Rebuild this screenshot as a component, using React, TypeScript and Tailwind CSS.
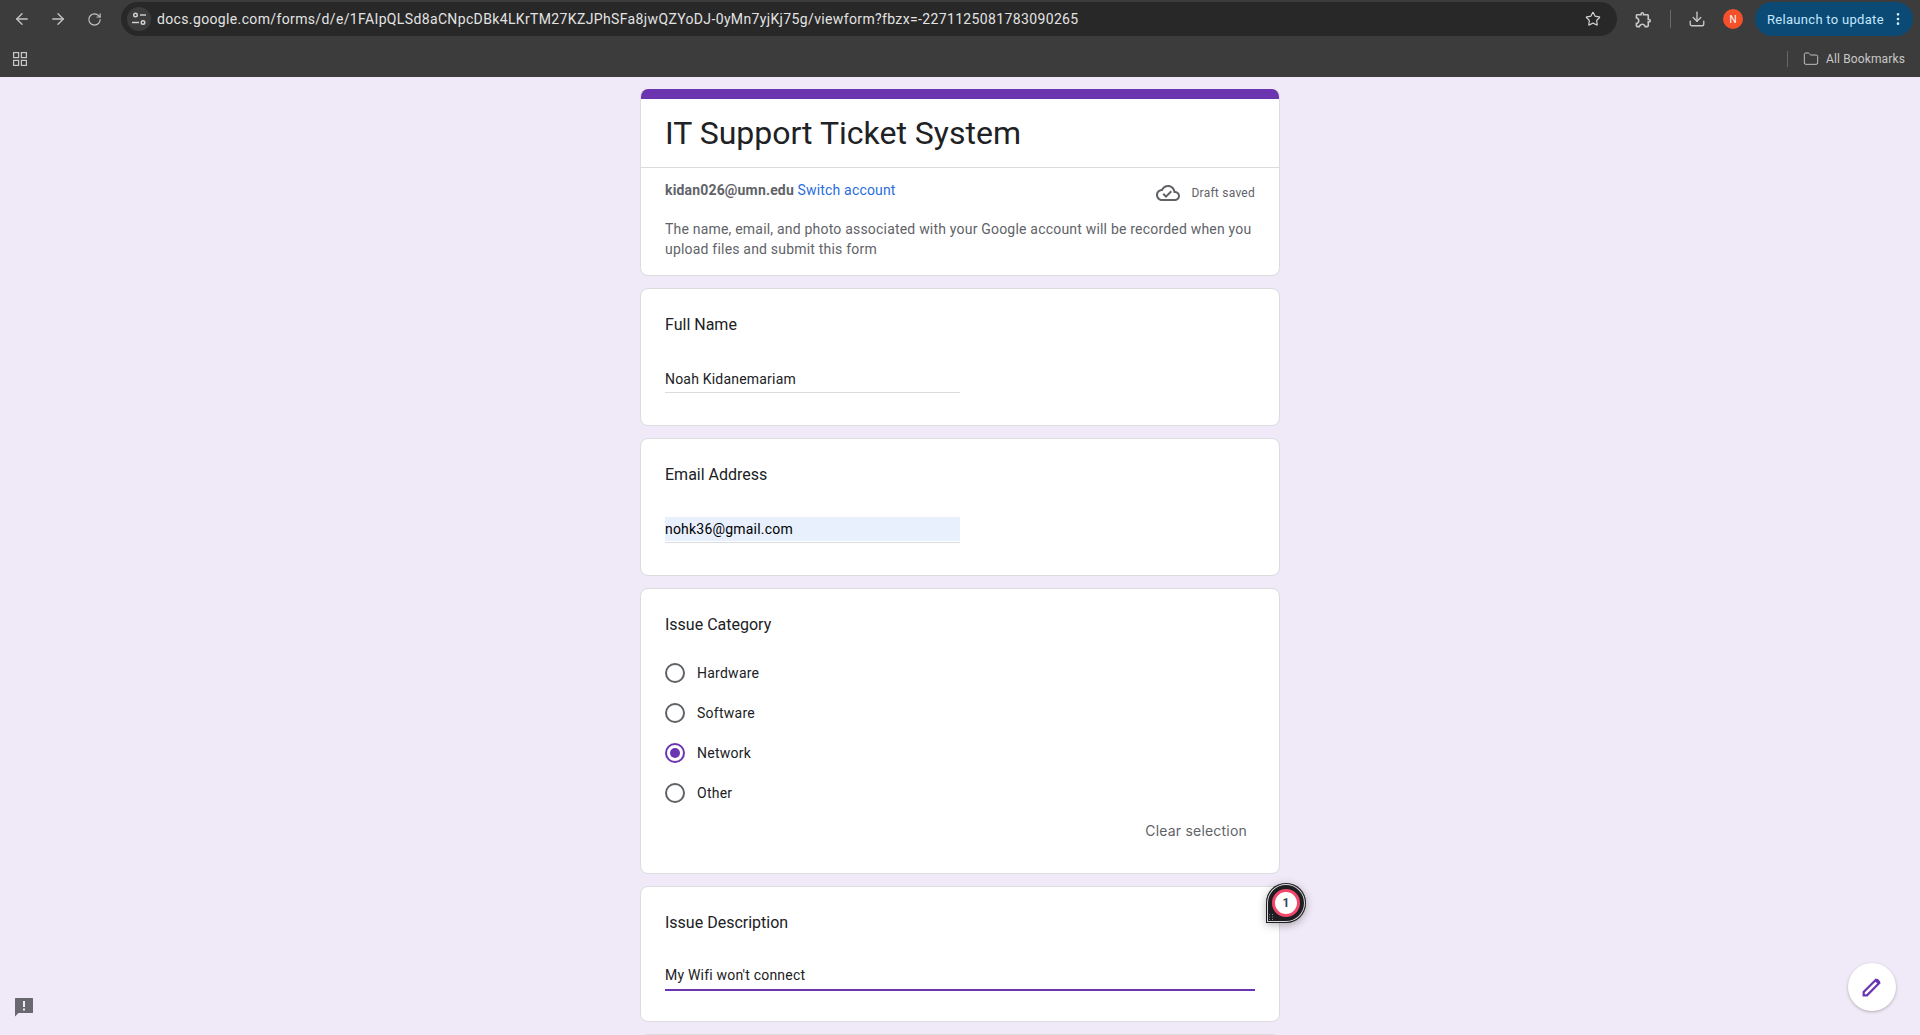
import React from "react";
import { ArrowLeft, ArrowRight, RotateCw, Star, Download, EllipsisVertical, Folder } from "lucide-react";

const roboto = "font-['Roboto',sans-serif]";

function Tune() {
  return (
    <svg width="16" height="16" viewBox="0 0 16 16" fill="none" stroke="#d5d5d5" strokeWidth="1.4">
      <circle cx="4.5" cy="4" r="1.8" />
      <path d="M9 4h6" />
      <path d="M1 11.5h7" />
      <circle cx="12" cy="11.5" r="1.8" />
    </svg>
  );
}

function Apps() {
  return (
    <svg width="14" height="14" viewBox="0 0 14 14" fill="none" stroke="#c8c8c8" strokeWidth="1.2">
      <rect x="0.6" y="0.6" width="5" height="5" />
      <rect x="8.4" y="0.6" width="5" height="5" />
      <rect x="0.6" y="8.4" width="5" height="5" />
      <rect x="8.4" y="8.4" width="5" height="5" />
    </svg>
  );
}

function Extension() {
  return (
    <svg width="19" height="19" viewBox="0 0 24 24" fill="#c8c8c8">
      <path d="M10.5 4.5c.28 0 .5.22.5.5v2h6v6h2c.28 0 .5.22.5.5s-.22.5-.5.5h-2v6h-2.12c-.68-1.75-2.39-3-4.38-3s-3.7 1.25-4.38 3H4v-2.12c1.75-.68 3-2.39 3-4.38 0-1.99-1.24-3.7-2.99-4.38L4 7h6V5c0-.28.22-.5.5-.5m0-2C9.12 2.5 8 3.62 8 5H4c-1.1 0-1.99.9-1.99 2v3.8h.29c1.49 0 2.7 1.21 2.7 2.7s-1.21 2.7-2.7 2.7H2V20c0 1.1.9 2 2 2h3.8v-.3c0-1.49 1.21-2.7 2.7-2.7s2.7 1.21 2.7 2.7v.3H17c1.1 0 2-.9 2-2v-4c1.38 0 2.5-1.12 2.5-2.5S20.38 11 19 11V7c0-1.1-.9-2-2-2h-4c0-1.38-1.12-2.5-2.5-2.5z" />
    </svg>
  );
}

function CloudDone() {
  return (
    <svg width="24" height="24" viewBox="0 0 24 24" fill="#5f6368">
      <path d="M19.35 10.04C18.67 6.59 15.64 4 12 4 9.11 4 6.6 5.64 5.35 8.04 2.34 8.36 0 10.91 0 14c0 3.31 2.69 6 6 6h13c2.76 0 5-2.24 5-5 0-2.64-2.05-4.78-4.65-4.96zM19 18H6c-2.21 0-4-1.79-4-4 0-2.05 1.53-3.76 3.56-3.97l1.07-.11.5-.95C8.08 7.14 9.94 6 12 6c2.62 0 4.88 1.86 5.39 4.43l.3 1.5 1.53.11c1.56.1 2.78 1.41 2.78 2.96 0 1.65-1.35 3-3 3zm-9-3.82l-2.09-2.09L6.5 13.5 10 17l6.01-6.01-1.41-1.41z" />
    </svg>
  );
}

function Radio({ label, checked }: { label: string; checked?: boolean }) {
  return (
    <div className="flex h-[40px] items-center">
      <div className={`flex h-[20px] w-[20px] items-center justify-center rounded-full border-2 ${checked ? "border-[#6b35b0]" : "border-[#5f6368]"}`}>
        {checked && <div className="h-[10px] w-[10px] rounded-full bg-[#6b35b0]" />}
      </div>
      <span className="ml-[12px] text-[14px] leading-[20px] tracking-[0.25px] text-[#202124]">{label}</span>
    </div>
  );
}

function Card({ className, children }: { className?: string; children: React.ReactNode }) {
  return <section className={`w-[640px] shrink-0 rounded-lg border border-[#dadce0] bg-white px-[24px] ${className ?? ""}`}>{children}</section>;
}

export default function App() {
  return (
    <div className={`relative flex h-[1035px] flex-col overflow-hidden bg-[#f0e9f7] ${roboto}`}>
      <header className="flex h-[77px] shrink-0 flex-col bg-[#3c3c3c]">
        <div className="flex h-[38px] items-center">
          <div className="flex w-[121px] shrink-0 items-center pl-[13px] text-[#c4c4c4]">
            <ArrowLeft size={18} strokeWidth={1.8} />
            <ArrowRight size={18} strokeWidth={1.8} className="ml-[18px]" />
            <RotateCw size={15} strokeWidth={1.8} className="ml-[20px]" />
          </div>
          <div className="flex h-[34px] w-[1496px] shrink-0 items-center rounded-full bg-[#282828] pl-[6px] pr-[16px]">
            <div className="flex h-[24px] w-[24px] items-center justify-center rounded-full bg-[#3c3c3c]">
              <Tune />
            </div>
            <span className="ml-[6px] flex-1 text-[14px] tracking-[0.36px] text-[#e3e3e3]">docs.google.com/forms/d/e/1FAIpQLSd8aCNpcDBk4LKrTM27KZJPhSFa8jwQZYoDJ-0yMn7yjKj75g/viewform?fbzx=-2271125081783090265</span>
            <Star size={16} strokeWidth={1.8} className="text-[#d0d0d0]" />
          </div>
          <div className="ml-[17px]">
            <Extension />
          </div>
          <div className="ml-[17px] h-[18px] w-px bg-[#6a6a6a]" />
          <Download size={18} strokeWidth={1.8} className="ml-[17px] text-[#c8c8c8]" />
          <div className="ml-[17px] flex h-[20px] w-[20px] items-center justify-center rounded-full bg-[#f4502a] text-[10px] text-white">N</div>
          <div className="ml-[12px] flex h-[34px] w-[158px] items-center rounded-full bg-[#0b4a75] pl-[12px] text-[13px] tracking-[0.3px] text-[#c2e7ff]">
            <span className="pt-[1px]">Relaunch to update</span>
            <EllipsisVertical size={16} className="ml-[6px] text-[#d3ecff]" />
          </div>
        </div>
        <div className="flex flex-1 items-center pl-[13px] pr-[15px] pt-[3px]">
          <Apps />
          <div className="ml-auto h-[16px] w-px bg-[#666666]" />
          <Folder size={16} strokeWidth={1.4} className="ml-[15px] text-[#c8c8c8]" />
          <span className="ml-[7px] text-[12px] tracking-[0.13px] text-[#c8c8c8]">All Bookmarks</span>
        </div>
      </header>

      <main className="flex flex-col items-center gap-[12px] pt-[12px]">
        <section className="w-[640px] shrink-0 overflow-hidden rounded-lg border border-[#dadce0] border-t-0 bg-white">
          <div className="h-[10px] bg-[#6b35b0]" />
          <div className="flex h-[69px] items-center border-b border-[#dadce0] px-[24px] text-[32px] leading-[40px] text-[#202124]">IT Support Ticket System</div>
          <div className="px-[24px]">
            <div className="flex h-[44px] pt-[12px]">
              <div className="text-[14px] leading-[20px] tracking-[0.17px]">
                <span className="font-bold text-[#5f6368]">kidan026@umn.edu</span> <span className="text-[#2a6de0]">Switch account</span>
              </div>
              <div className="ml-auto flex items-center self-start pt-[1px] text-[12px] leading-[16px] text-[#5f6368]">
                <CloudDone />
                <span className="ml-[11px] tracking-[0.25px]">Draft saved</span>
              </div>
            </div>
            <p className="pb-[16px] pt-[7px] text-[14px] leading-[20px] tracking-[0.2px] text-[#5f6368]">The name, email, and photo associated with your Google account will be recorded when you upload files and submit this form</p>
          </div>
        </section>

        <Card className="h-[138px] pt-[24px]">
          <h2 className="text-[16px] leading-[24px] text-[#202124]">Full Name</h2>
          <div className="mt-[32px] h-[24px] w-[295px] border-b border-[#dadce0] text-[14px] leading-[20px] tracking-[0.2px] text-[#202124]">Noah Kidanemariam</div>
        </Card>

        <Card className="h-[138px] pt-[24px]">
          <h2 className="text-[16px] leading-[24px] text-[#202124]">Email Address</h2>
          <div className="mt-[30px] h-[26px] w-[295px] border-b border-[#dadce0]">
            <div className="flex h-[24px] items-center bg-[#e8f0fe] text-[14px] tracking-[0.2px] text-black">nohk36@gmail.com</div>
          </div>
        </Card>

        <Card className="h-[286px] pt-[24px]">
          <h2 className="text-[16px] leading-[24px] text-[#202124]">Issue Category</h2>
          <div className="mt-[16px]">
            <Radio label="Hardware" />
            <Radio label="Software" />
            <Radio label="Network" checked />
            <Radio label="Other" />
          </div>
          <div className="mt-[8px] pr-[8px] text-right font-['Inter',sans-serif] text-[14px] leading-[20px] tracking-[0.2px] text-[#5f6368]">Clear selection</div>
        </Card>

        <Card className="h-[136px] pt-[24px]">
          <h2 className="text-[16px] leading-[24px] text-[#202124]">Issue Description</h2>
          <div className="mt-[30px] h-[26px] border-b-2 border-[#6b35b0] text-[14px] leading-[20px] tracking-[0.2px] text-[#202124]">My Wifi won't connect</div>
        </Card>

        <Card className="h-[100px]">
          <span />
        </Card>
      </main>

      <div className="absolute left-[1266px] top-[883px] flex h-[40px] w-[40px] items-center justify-center rounded-[20px] rounded-bl-none bg-[#1d1d22] shadow-[inset_0_0_0_1px_#1d1d22,inset_0_0_0_2px_#d9d9d9,0_2px_8px_rgba(0,0,0,0.3)]">
        <div className="flex h-[28px] w-[28px] items-center justify-center rounded-full border-[3px] border-[#f0476a] bg-white text-[12px] font-bold text-[#3a3f5c]">1</div>
        <svg className="absolute bottom-[3px] left-[3px]" width="5" height="6" viewBox="0 0 5 6" fill="#8a8a8a">
          <rect x="0" y="0" width="1" height="1" />
          <rect x="3" y="0" width="1" height="1" />
          <rect x="0" y="2.5" width="1" height="1" />
          <rect x="3" y="2.5" width="1" height="1" />
          <rect x="0" y="5" width="1" height="1" />
          <rect x="3" y="5" width="1" height="1" />
        </svg>
      </div>

      <button className="absolute left-[1848px] top-[963px] flex h-[48px] w-[48px] items-center justify-center rounded-full bg-white shadow-[0_1px_3px_rgba(60,64,67,0.35)]">
        <svg width="20" height="20" viewBox="0 0 18 18" fill="none">
          <path d="M1.5 16.5v-3L12.5 2.5l3 3L4.5 16.5z" stroke="#6b35b0" strokeWidth="2" />
          <path d="M11.5 3.5l1.5-1.5a1 1 0 0 1 1.4 0l1.6 1.6a1 1 0 0 1 0 1.4l-1.5 1.5z" fill="#6b35b0" />
        </svg>
      </button>

      <div className="absolute left-[14px] top-[997px]">
        <svg width="20" height="20" viewBox="0 0 20 20">
          <path d="M1.5 1h17a.5.5 0 0 1 .5.5v14a.5.5 0 0 1-.5.5H4.5L1 19.5V1.5a.5.5 0 0 1 .5-.5z" fill="#68686e" />
          <rect x="9" y="4" width="2" height="6" fill="#f0e9f7" />
          <rect x="9" y="11.5" width="2" height="2" fill="#f0e9f7" />
        </svg>
      </div>
    </div>
  );
}
